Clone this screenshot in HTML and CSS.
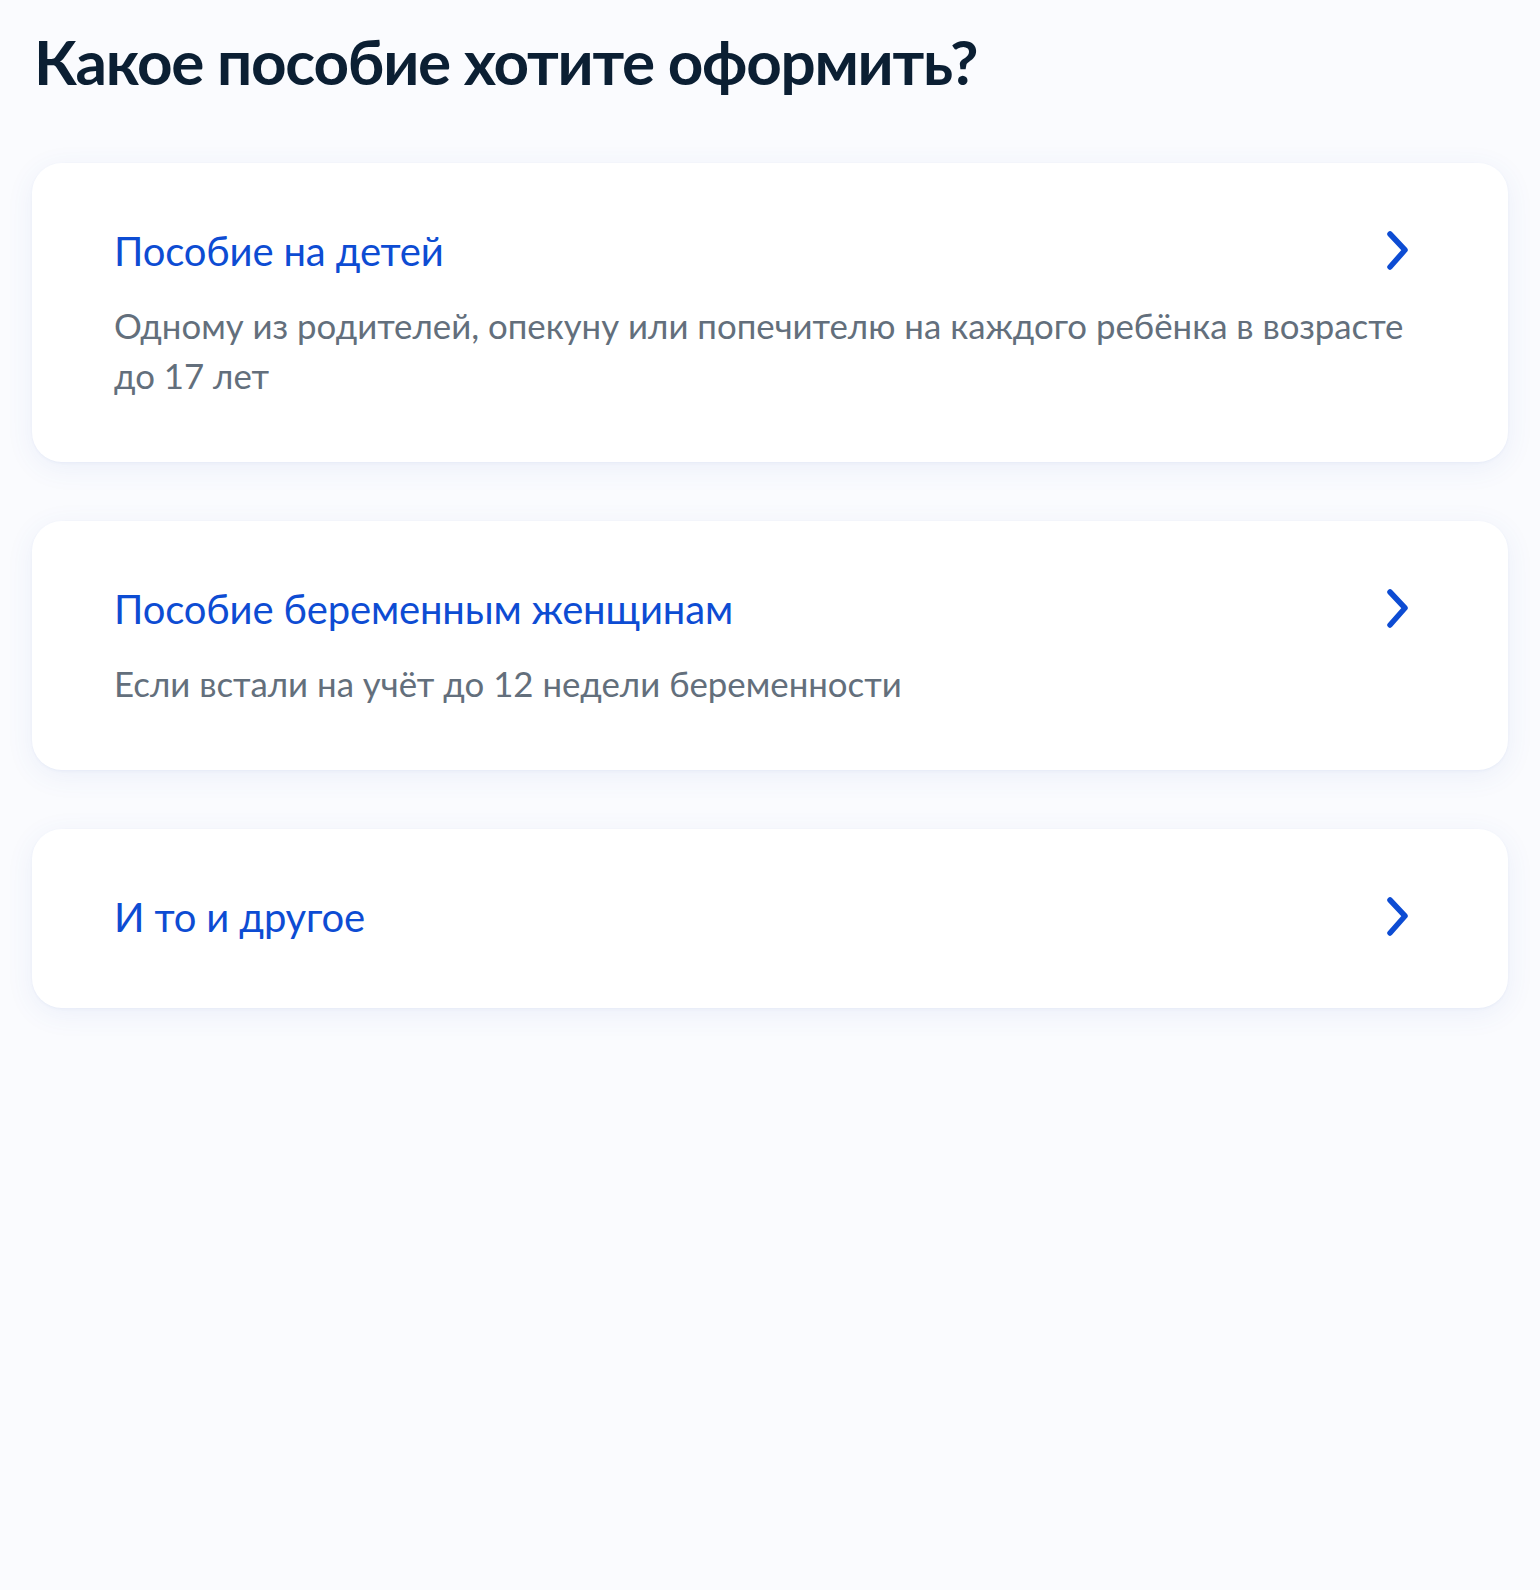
FILE: index.html
```html
<html>
  <head>
    <title>Какое пособие хотите оформить?</title>
    <link rel="stylesheet" href="styles.css">
  </head>
  <body>
    <div class="page">
      <h1 class="header">Какое пособие хотите оформить?</h1>
      <div class="options">
        <a class="option-card" href="#">
          <div class="option-top">
            <div class="option-title">Пособие на детей</div>
            <svg class="chevron" width="24" height="40" viewBox="0 0 24 40" fill="none" xmlns="http://www.w3.org/2000/svg">
              <path d="M4 3L19 19L4 36" stroke="#0D4CD3" stroke-width="5.5" stroke-linecap="round" stroke-linejoin="round"/>
            </svg>
          </div>
          <div class="option-desc">Одному из родителей, опекуну или попечителю на каждого ребёнка в возрасте до 17 лет</div>
        </a>
        <a class="option-card" href="#">
          <div class="option-top">
            <div class="option-title">Пособие беременным женщинам</div>
            <svg class="chevron" width="24" height="40" viewBox="0 0 24 40" fill="none" xmlns="http://www.w3.org/2000/svg">
              <path d="M4 3L19 19L4 36" stroke="#0D4CD3" stroke-width="5.5" stroke-linecap="round" stroke-linejoin="round"/>
            </svg>
          </div>
          <div class="option-desc">Если встали на учёт до 12 недели беременности</div>
        </a>
        <a class="option-card" href="#">
          <div class="option-top">
            <div class="option-title">И то и другое</div>
            <svg class="chevron" width="24" height="40" viewBox="0 0 24 40" fill="none" xmlns="http://www.w3.org/2000/svg">
              <path d="M4 3L19 19L4 36" stroke="#0D4CD3" stroke-width="5.5" stroke-linecap="round" stroke-linejoin="round"/>
            </svg>
          </div>
        </a>
      </div>
    </div>
  </body>
</html>
```
FILE: styles.css
```css
* {
  box-sizing: border-box;
}
html {
  background-color: #fafbfe;
}
body {
  margin: 0;
  font-family: Lato, "Noto Sans", sans-serif;
  color: #0b1f33;
}
.page {
  padding: 15px 32px 32px;
}
.header {
  font-size: 62px;
  font-weight: 700;
  line-height: 92px;
  letter-spacing: -1.25px;
  margin: 0 0 56px 2px;
  color: #0b1f33;
}
.options {
  display: flex;
  flex-direction: column;
  gap: 59px;
}
.option-card {
  display: flex;
  flex-direction: column;
  gap: 22px;
  background-color: #ffffff;
  border-radius: 30px;
  padding: 60px 94px 61px 82px;
  text-decoration: none;
  box-shadow: 0 6px 28px rgba(66, 103, 194, 0.08), 0 1px 3px rgba(66, 103, 194, 0.06);
}
.option-card:last-child {
  padding-bottom: 63px;
}
.option-top {
  display: flex;
  align-items: flex-start;
  justify-content: space-between;
  gap: 40px;
}
.option-title {
  font-size: 40px;
  line-height: 56px;
  letter-spacing: -0.15px;
  color: #0d4cd3;
}
.option-desc {
  font-size: 34.8px;
  line-height: 50px;
  color: #636f7c;
}
.chevron {
  flex-shrink: 0;
  margin-top: 8px;
  margin-right: 4px;
}
```
